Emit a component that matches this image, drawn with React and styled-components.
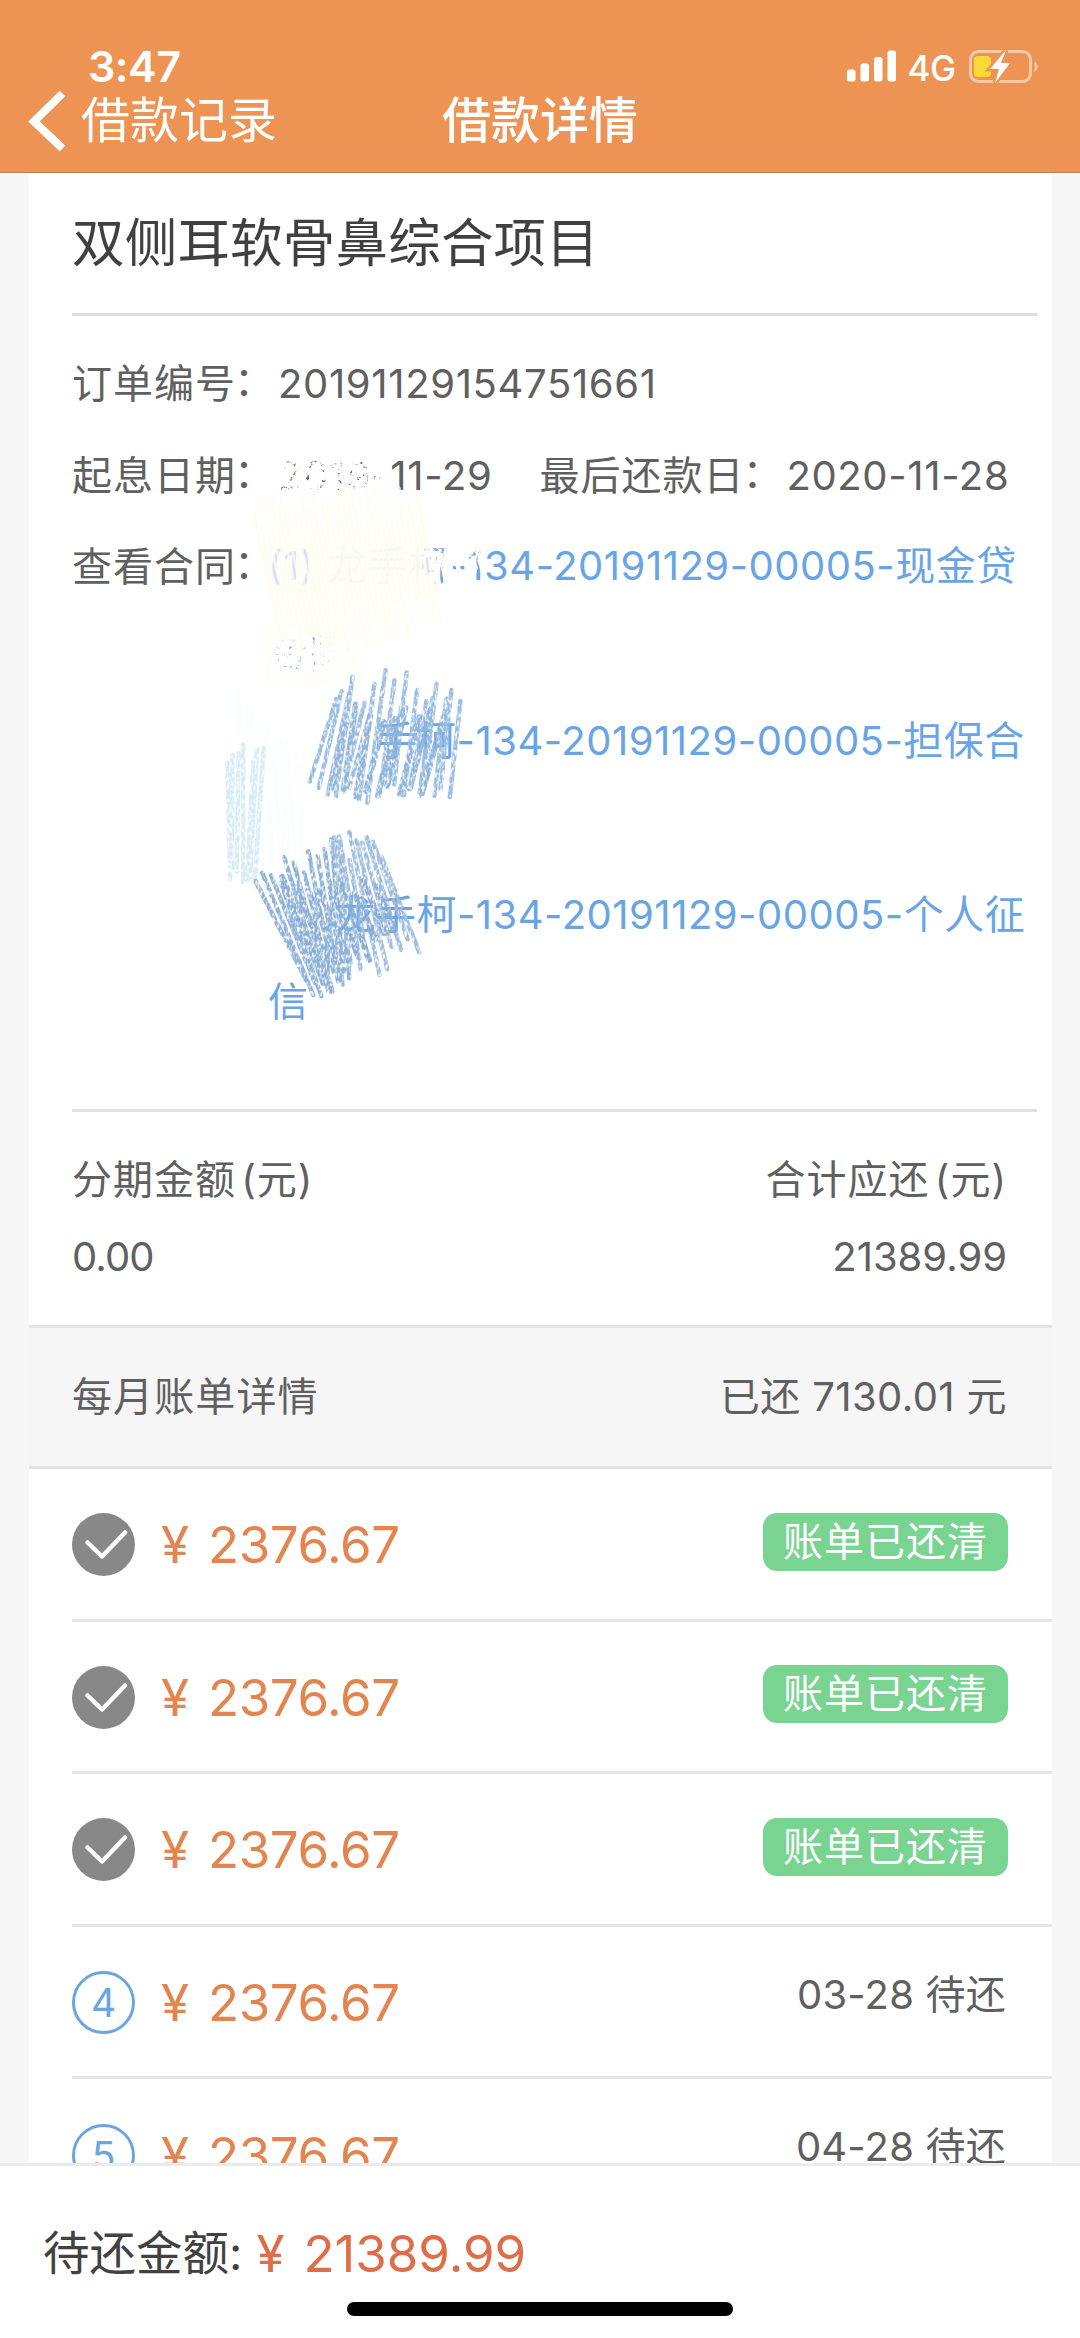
import React from "react";
import styled, { createGlobalStyle } from "styled-components";

const bills = [
  { id: 1, amount: "2376.67", paid: true },
  { id: 2, amount: "2376.67", paid: true },
  { id: 3, amount: "2376.67", paid: true },
  { id: 4, amount: "2376.67", due: "03-28" },
  { id: 5, amount: "2376.67", due: "04-28" },
];

const contracts = [
  { head: "(1)", code: "龙手柯-134-20191129-00005-现金贷", tail: "合同" },
  { head: "(2)", code: "龙手柯-134-20191129-00005-担保合", tail: "同" },
  { head: "(3)", code: "龙手柯-134-20191129-00005-个人征", tail: "信" },
];

const noise = (n) => {
  const v = Math.sin(n * 127.1) * 43758.5453;
  return v - Math.floor(v);
};

// crayon hatching between two edges, both given as [x1, y1, x2, y2]
const hatch = (top, bottom, count, jitter, seed) => {
  let d = "";
  for (let i = 0; i < count; i++) {
    const t = i / (count - 1);
    const a = (noise(seed + i) - 0.5) * jitter;
    const b = (noise(seed + i + 50) - 0.5) * jitter;
    const x1 = top[0] + (top[2] - top[0]) * t + a * 0.2;
    const y1 = top[1] + (top[3] - top[1]) * t + a;
    const x2 = bottom[0] + (bottom[2] - bottom[0]) * t + b * 0.2;
    const y2 = bottom[1] + (bottom[3] - bottom[1]) * t + b;
    d += `M${x1.toFixed(1)} ${y1.toFixed(1)}L${x2.toFixed(1)} ${y2.toFixed(1)}`;
  }
  return d;
};

const Scribbles = () => (
  <ScribbleLayer viewBox="210 440 290 600" width="290" height="600" fill="none" strokeLinecap="round">
    <defs>
      <filter id="crayon" x="-10%" y="-10%" width="120%" height="120%">
        <feTurbulence type="fractalNoise" baseFrequency="0.4 0.22" numOctaves="2" seed="4" result="grain" />
        <feColorMatrix in="grain" type="matrix" values="0 0 0 0 0  0 0 0 0 0  0 0 0 0 0  0 0 0 -3.2 2.4" result="mask" />
        <feComposite in="SourceGraphic" in2="mask" operator="in" />
      </filter>
      <filter id="chalk" x="-10%" y="-10%" width="120%" height="120%">
        <feTurbulence type="fractalNoise" baseFrequency="0.3" numOctaves="2" seed="9" result="grain" />
        <feColorMatrix in="grain" type="matrix" values="0 0 0 0 0  0 0 0 0 0  0 0 0 0 0  0 0 0 -5 3.8" result="mask" />
        <feComposite in="SourceGraphic" in2="mask" operator="in" />
      </filter>
    </defs>
    <g filter="url(#chalk)">
      <path d={hatch([274, 454, 388, 454], [282, 496, 388, 496], 24, 6, 3)} stroke="#fff" strokeWidth="7" />
      <path d={hatch([430, 540, 474, 545], [440, 590, 484, 570], 7, 20, 31)} stroke="#fff" strokeWidth="5" />
      <path d={hatch([262, 628, 350, 625], [272, 685, 360, 680], 20, 10, 41)} stroke="#fffefa" strokeWidth="8" />
    </g>
    <path d="M308 545H422V588H308ZM324 632H354V676H324Z" fill="#fffefa" opacity="0.8" />
    <path d={hatch([256, 508, 420, 505], [280, 636, 440, 603], 34, 34, 11)} stroke="#fffefa" strokeWidth="8" opacity="0.7" />
    <path d={hatch([300, 590, 430, 590], [335, 660, 410, 628], 16, 20, 15)} stroke="#fffefa" strokeWidth="6" opacity="0.8" />
    <path d={hatch([254, 515, 420, 510], [282, 640, 438, 608], 34, 50, 17)} stroke="#fffcee" strokeWidth="2.500" opacity="0.7" />
    <path d="M268 718H380V764H268ZM268 805H320V850H268ZM268 893H333V938H268Z" fill="#fff" />
    <path d={hatch([238, 700, 300, 760], [248, 880, 306, 858], 18, 34, 9)} stroke="#fafefe" strokeWidth="3" />
    <g filter="url(#crayon)">
      <path d={hatch([228, 766, 264, 750], [228, 868, 254, 876], 7, 28, 7)} stroke="#d9ecf4" strokeWidth="4.500" />
      <path d={hatch([334, 688, 458, 688], [312, 792, 450, 798], 19, 38, 61)} stroke="#9bbde0" strokeWidth="4.500" />
      <path d={hatch([346, 716, 442, 708], [334, 798, 422, 794], 9, 26, 71)} stroke="#8fb5dc" strokeWidth="6" />
      <path d={hatch([256, 884, 340, 842], [308, 988, 350, 982], 12, 24, 81)} stroke="#8fb2d7" strokeWidth="4.500" />
      <path d={hatch([336, 846, 380, 850], [354, 980, 416, 936], 9, 34, 91)} stroke="#9fbede" strokeWidth="4.500" />
      <path d={hatch([284, 886, 376, 884], [322, 980, 396, 940], 9, 26, 101)} stroke="#8baed5" strokeWidth="6" />
    </g>
  </ScribbleLayer>
);

const Battery = () => (
  <svg width="72" height="36" viewBox="968 48 72 36" fill="none">
    <rect x="970.5" y="51.5" width="60" height="30" rx="8" stroke="#f8c9a5" strokeWidth="3" />
    <path d="M1034.500 61.500a6 6 0 0 1 0 10.500z" fill="#f8c9a5" />
    <rect x="974" y="56" width="17" height="21" rx="4" fill="#fbd83a" />
    <path d="M1006 50L990 69h9l-4 14 15-20h-9z" fill="#fff" stroke="#ed9455" strokeWidth="5" paintOrder="stroke" />
  </svg>
);

const App = () => {
  return (
    <Screen>
      <GlobalStyle />
      <Header>
        <StatusBar>
          <Time>3:47</Time>
          <StatusIcons>
            <svg width="50" height="32" viewBox="0 0 50 32" fill="#fff">
              <rect x="0" y="19.500" width="8.500" height="12" rx="2.500" />
              <rect x="13.500" y="13.500" width="8.500" height="18" rx="2.500" />
              <rect x="27" y="7" width="8.500" height="24.500" rx="2.500" />
              <rect x="40.500" y="0.500" width="8.500" height="31" rx="2.500" />
            </svg>
            <Network>4G</Network>
            <Battery />
          </StatusIcons>
        </StatusBar>
        <NavBar>
          <Back>
            <svg width="40" height="62" viewBox="0 0 40 62" fill="none">
              <path d="M34.500 3.500L6 31.500l28.500 27" stroke="#fff" strokeWidth="8" />
            </svg>
            借款记录
          </Back>
          <NavTitle>借款详情</NavTitle>
        </NavBar>
      </Header>

      <Content>
        <Card>
          <ProjectTitle>双侧耳软骨鼻综合项目</ProjectTitle>
          <Info>
            <InfoRow>
              <Label>
                订单编号<Colon>：</Colon>
              </Label>
              <Value>20191129154751661</Value>
            </InfoRow>
            <InfoRow>
              <Label>
                起息日期<Colon>：</Colon>
              </Label>
              <Value>2019-11-29</Value>
              <Label $second>
                最后还款日<Colon>：</Colon>
              </Label>
              <Value>2020-11-28</Value>
            </InfoRow>
            <InfoRow>
              <Label $short>
                查看合同<Colon>：</Colon>
              </Label>
              <Contracts>
                {contracts.map((item) => (
                  <Contract key={item.head}>
                    <span>
                      <ContractNo>{item.head}</ContractNo>
                      {item.code}
                    </span>
                    <span>{item.tail}</span>
                  </Contract>
                ))}
              </Contracts>
            </InfoRow>
          </Info>
          <Amounts>
            <Amount>
              <AmountLabel>分期金额 (元)</AmountLabel>
              <span>0.00</span>
            </Amount>
            <Amount $right>
              <AmountLabel>合计应还 (元)</AmountLabel>
              <span>21389.99</span>
            </Amount>
          </Amounts>
          <SectionHead>
            <SectionTitle>每月账单详情</SectionTitle>
            <SectionSum>已还 7130.01 元</SectionSum>
          </SectionHead>
          {bills.map((bill) => (
            <BillRow key={bill.id}>
              <Step $done={bill.paid}>
                {bill.paid ? (
                  <svg width="62" height="63" viewBox="0 0 62 63" fill="none">
                    <path
                      d="M14.500 29.500L29 43.500L52 19.500"
                      stroke="#fff"
                      strokeWidth="4.500"
                      strokeLinecap="round"
                      strokeLinejoin="round"
                    />
                  </svg>
                ) : (
                  bill.id
                )}
              </Step>
              <Yen>¥</Yen>
              <Price>{bill.amount}</Price>
              {bill.paid ? <Badge>账单已还清</Badge> : <Due>{bill.due} 待还</Due>}
            </BillRow>
          ))}
          <Scribbles />
        </Card>
      </Content>

      <Footer>
        <Total>
          <TotalLabel>待还金额:</TotalLabel>
          <Yen $total>¥</Yen>
          <Price $total>21389.99</Price>
        </Total>
        <HomeIndicator />
      </Footer>
    </Screen>
  );
};

export default App;

const GlobalStyle = createGlobalStyle`
  * {
    box-sizing: border-box;
  }
  body {
    margin: 0;
  }
`;

const Screen = styled.div`
  display: flex;
  flex-direction: column;
  width: 1080px;
  height: 2338px;
  overflow: hidden;
  background-color: #fff;
  color: #606060;
  font-family: Inter, "Noto Sans CJK SC", sans-serif;
  font-size: 40px;
  white-space: nowrap;
`;

const Header = styled.div`
  height: 173px;
  flex-shrink: 0;
  padding-top: 42px;
  background-color: #ed9455;
  border-bottom: 1px solid #b9805a;
  color: #fff;
`;

const StatusBar = styled.div`
  display: flex;
  justify-content: space-between;
  align-items: center;
  height: 48px;
  padding: 0 40px 0 88px;
`;

const Time = styled.span`
  font-size: 43px;
  font-weight: 600;
  letter-spacing: -0.5px;
`;

const StatusIcons = styled.div`
  display: flex;
  align-items: center;
`;

const Network = styled.span`
  margin: 3px 12px 0 10px;
  font-size: 35px;
  font-weight: 500;
  letter-spacing: -0.3px;
`;

const NavBar = styled.div`
  display: grid;
  grid-template-columns: 1fr auto 1fr;
  align-items: center;
  height: 62px;
  font-size: 49px;
  line-height: 62px;
`;

const Back = styled.div`
  display: flex;
  align-items: center;
  gap: 13px;
  padding-left: 28px;
`;

const NavTitle = styled.div`
  font-weight: 500;
`;

const Content = styled.div`
  height: 1990px;
  flex-shrink: 0;
  overflow: hidden;
  padding: 0 28px 0 29px;
  background-color: #f7f7f7;
`;

const Card = styled.div`
  position: relative;
  height: 2100px;
  background-color: #fff;
`;

const ProjectTitle = styled.div`
  height: 143px;
  margin: 0 15px 0 43px;
  border-bottom: 3px solid #dfdfdf;
  color: #404040;
  font-size: 52.5px;
  letter-spacing: 0.2px;
  line-height: 141px;
`;

const Info = styled.div`
  height: 796px;
  margin: 0 15px 0 43px;
  padding-top: 22px;
  border-bottom: 3px solid #e2e2e2;
`;

const InfoRow = styled.div`
  display: flex;
  line-height: 91.5px;
`;

const Label = styled.span`
  width: ${({ $short, $second }) => ($short ? "196px" : $second ? "247px" : "206px")};
  margin-left: ${({ $second }) => ($second ? "47px" : "0")};
  letter-spacing: 1px;
`;

const Colon = styled.span`
  margin-left: -2px;
  font-feature-settings: "halt";
  vertical-align: 3px;
  line-height: 1;
`;

const Value = styled.span`
  letter-spacing: 0.65px;
`;

const Contracts = styled.div`
  padding-top: 1px;
  line-height: 87.3px;
  color: #69a5e4;
  letter-spacing: 0.5px;
`;

const Contract = styled.div`
  display: flex;
  flex-direction: column;
`;

const ContractNo = styled.span`
  margin-right: 12px;
`;

const Amounts = styled.div`
  display: flex;
  justify-content: space-between;
  height: 213px;
  padding: 29px 45px 0 43px;
`;

const Amount = styled.div`
  display: flex;
  flex-direction: column;
  line-height: 77px;
  text-align: ${({ $right }) => ($right ? "right" : "left")};
  letter-spacing: ${({ $right }) => ($right ? "0" : "-0.9px")};
`;

const AmountLabel = styled.span`
  letter-spacing: 1px;
  word-spacing: -7px;
`;

const SectionHead = styled.div`
  display: flex;
  justify-content: space-between;
  height: 144px;
  padding: 0 45px 0 43px;
  background-color: #f6f6f6;
  border-top: 3px solid #e3e3e3;
  border-bottom: 3px solid #e3e3e3;
  line-height: 138px;
`;

const SectionTitle = styled.span`
  letter-spacing: 1.1px;
`;

const SectionSum = styled.span`
  letter-spacing: 0.4px;
`;

const BillRow = styled.div`
  display: flex;
  align-items: center;
  height: 152.6px;
  margin-left: 43px;
  padding: 2px 43px 0 0;
  border-bottom: 3px solid #e6e6e6;
`;

const Step = styled.div`
  display: flex;
  align-items: center;
  justify-content: center;
  width: 63px;
  height: 63px;
  border: ${({ $done }) => ($done ? "none" : "3px solid #6aa5e2")};
  border-radius: 50%;
  background-color: ${({ $done }) => ($done ? "#888" : "transparent")};
  color: #6aa5e2;
  font-size: 39px;
`;

const Yen = styled.span`
  width: ${({ $total }) => ($total ? "47px" : "47px")};
  margin-left: ${({ $total }) => ($total ? "14px" : "26px")};
  color: ${({ $total }) => ($total ? "#df6d48" : "#e38550")};
  font-size: 51px;
`;

const Price = styled.span`
  color: ${({ $total }) => ($total ? "#df6d48" : "#e38550")};
  font-size: 51px;
  letter-spacing: ${({ $total }) => ($total ? "0" : "-0.4px")};
`;

const Badge = styled.span`
  height: 58px;
  margin: 0 1px 6px auto;
  padding: 0 20px;
  border-radius: 14px;
  background-color: #78d490;
  color: #fff;
  letter-spacing: 1px;
  line-height: 58px;
`;

const Due = styled.span`
  margin: 0 3px 22px auto;
  letter-spacing: 0.2px;
`;

const Footer = styled.div`
  display: flex;
  flex-direction: column;
  justify-content: space-between;
  align-items: center;
  flex: 1;
  padding: 60px 0 22px;
  border-top: 3px solid #ebebeb;
`;

const Total = styled.div`
  display: flex;
  align-items: center;
  align-self: flex-start;
  height: 54px;
  padding-left: 43px;
`;

const TotalLabel = styled.span`
  color: #424242;
  font-size: 46.5px;
  line-height: 48px;
`;

const HomeIndicator = styled.div`
  width: 386px;
  height: 14px;
  border-radius: 7px;
  background-color: #000;
`;

const ScribbleLayer = styled.svg`
  position: absolute;
  left: 181px;
  top: 267px;
`;
